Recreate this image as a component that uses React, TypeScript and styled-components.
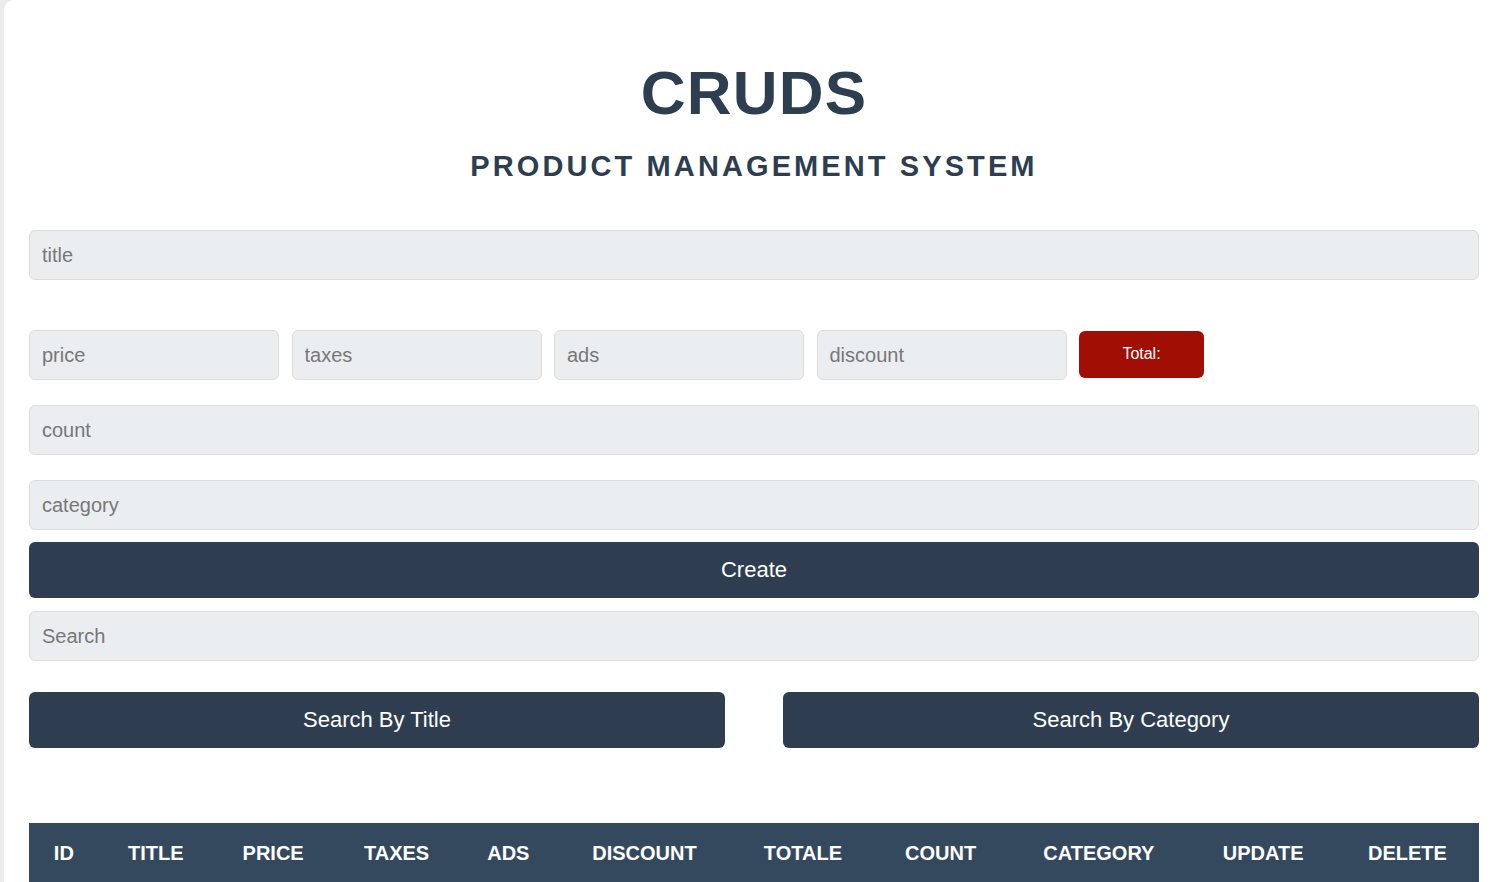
import React from "react";
import styled, { createGlobalStyle } from "styled-components";

const GlobalStyle = createGlobalStyle`
  * {
    box-sizing: border-box;
  }
  body {
    margin: 0;
    background: #ececec;
    font-family: "Liberation Sans", Arial, sans-serif;
    overflow: hidden;
  }
`;

const headers = [
  "id",
  "title",
  "price",
  "taxes",
  "ads",
  "discount",
  "totale",
  "count",
  "category",
  "update",
  "delete",
];

function App() {
  return (
    <>
      <GlobalStyle />
      <Page>
        <Header>
          <Title>CRUDS</Title>
          <Subtitle>Product Management System</Subtitle>
        </Header>

        <Inputs>
          <Field placeholder="title" />
          <PriceRow>
            <Field placeholder="price" $width="250px" />
            <Field placeholder="taxes" $width="250px" />
            <Field placeholder="ads" $width="250px" />
            <Field placeholder="discount" $width="250px" />
            <TotalBadge>Total:</TotalBadge>
          </PriceRow>
          <Field placeholder="count" $gap="25px" />
          <Field placeholder="category" $gap="12px" />
          <DarkButton>Create</DarkButton>
        </Inputs>

        <SearchBlock>
          <Field placeholder="Search" />
          <SearchButtons>
            <DarkButton>Search By Title</DarkButton>
            <DarkButton>Search By Category</DarkButton>
          </SearchButtons>
        </SearchBlock>

        <Table>
          <thead>
            <tr>
              {headers.map((h) => (
                <Th key={h}>{h}</Th>
              ))}
            </tr>
          </thead>
          <tbody />
        </Table>
      </Page>
    </>
  );
}

const Page = styled.div`
  margin-left: 4px;
  min-height: 882px;
  background: #fff;
  border-radius: 10px 0 0 0;
  padding: 57px 18px 40px 25px;
`;

const Header = styled.header`
  text-align: center;
  color: #2c3e50;
  margin-bottom: 47px;
`;

const Title = styled.h1`
  margin: 0 0 22px;
  font-size: 62px;
  font-weight: 700;
  letter-spacing: 1.2px;
  line-height: normal;
`;

const Subtitle = styled.h2`
  margin: 0;
  font-size: 29px;
  font-weight: 700;
  letter-spacing: 3.1px;
  text-transform: uppercase;
  line-height: normal;
`;

const Inputs = styled.div`
  display: flex;
  flex-direction: column;
`;

const Field = styled.input<{ $width?: string; $gap?: string }>`
  width: ${(p) => p.$width || "100%"};
  height: 50px;
  margin-bottom: ${(p) => p.$gap || "0"};
  padding: 0 12px;
  background: #ebeef0;
  border: 1px solid #dcdcdc;
  border-radius: 6px;
  outline: none;
  font-family: inherit;
  font-size: 20px;
  color: #333;

  &::placeholder {
    color: #777;
  }
`;

const PriceRow = styled.div`
  display: flex;
  align-items: flex-start;
  gap: 12.5px;
  margin: 50px 0 25px;
`;

const TotalBadge = styled.small`
  width: 125px;
  height: 47px;
  margin-top: 1px;
  display: flex;
  align-items: center;
  justify-content: center;
  background: #a10e04;
  color: #fff;
  border-radius: 6px;
  font-size: 16px;
  padding-bottom: 2px;
`;

const DarkButton = styled.button`
  width: 100%;
  height: 56px;
  border: none;
  border-radius: 6px;
  background: #2e3e50;
  color: #fff;
  font-family: inherit;
  font-size: 22px;
  cursor: pointer;
`;

const SearchBlock = styled.div`
  margin-top: 13px;
`;

const SearchButtons = styled.div`
  display: flex;
  gap: 58px;
  margin-top: 31px;
`;

const Table = styled.table`
  width: 100%;
  margin-top: 75px;
  border-collapse: collapse;
`;

const Th = styled.th`
  background: #35495e;
  color: #fff;
  font-size: 20px;
  font-weight: 700;
  text-transform: uppercase;
  padding: 19px 18px 18px;
  text-align: center;
`;

export default App;
